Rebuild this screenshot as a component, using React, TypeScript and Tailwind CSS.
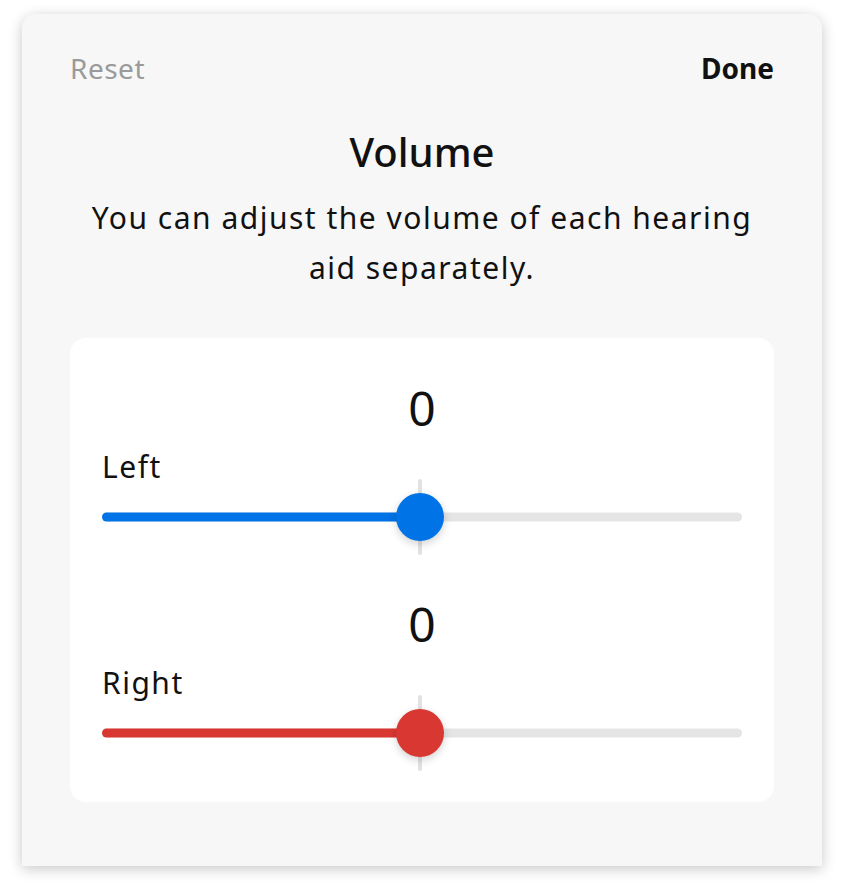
import React from "react";

const font = { fontFamily: '"Noto Sans", "Open Sans", sans-serif' };

function Slider({ color }: { color: string }) {
  return (
    <div className="relative h-[48px]">
      <div className="absolute left-0 right-0 top-1/2 h-[9px] -translate-y-1/2 rounded-full bg-[#e5e5e5]" />
      <div className={`absolute left-0 w-[318px] top-1/2 h-[9px] -translate-y-1/2 rounded-full ${color}`} />
      <div className="absolute left-[318px] top-1/2 h-[76px] w-[4px] -translate-x-1/2 -translate-y-1/2 rounded-full bg-[#e2e2e2]" />
      <div className={`absolute left-[318px] top-1/2 h-[48px] w-[48px] -translate-x-1/2 -translate-y-1/2 rounded-full shadow-[0_3px_8px_rgba(0,0,0,0.18)] ${color}`} />
    </div>
  );
}

function Channel({ label, color, first }: { label: string; color: string; first?: boolean }) {
  return (
    <div className={first ? "" : "mt-[55px]"}>
      <div className="text-center text-[48px] leading-[56px] text-[#111]">0</div>
      <div className="mt-[15px] mb-[10px] text-[30px] leading-[32px] tracking-[1.5px] text-[#111]">{label}</div>
      <Slider color={color} />
    </div>
  );
}

export default function App() {
  return (
    <div className="w-full h-[896px] bg-white pt-[14px] pl-[22px]" style={font}>
      <div className="w-[800px] h-[852px] bg-[#f7f7f7] rounded-t-[14px] shadow-[0_3px_14px_rgba(0,0,0,0.22)] px-[48px] pt-[34px]">
        <div className="flex justify-between text-[28px] leading-[40px]">
          <button type="button" className="text-[#9a9a9a] tracking-[0.5px]">Reset</button>
          <button type="button" className="font-bold text-[#111]">Done</button>
        </div>
        <h2 className="mt-[40px] text-center text-[40px] leading-[48px] font-medium text-[#111]">Volume</h2>
        <p className="mt-[17px] mx-auto max-w-[700px] text-center text-[30px] leading-[50px] tracking-[1.5px] text-[#111]">
          You can adjust the volume of each hearing
          <br />
          aid separately.
        </p>
        <div className="mt-[45px] rounded-2xl bg-white px-8 pt-[42px] pb-[45px]">
          <Channel label="Left" color="bg-[#0073e6]" first />
          <Channel label="Right" color="bg-[#d93832]" />
        </div>
      </div>
    </div>
  );
}
